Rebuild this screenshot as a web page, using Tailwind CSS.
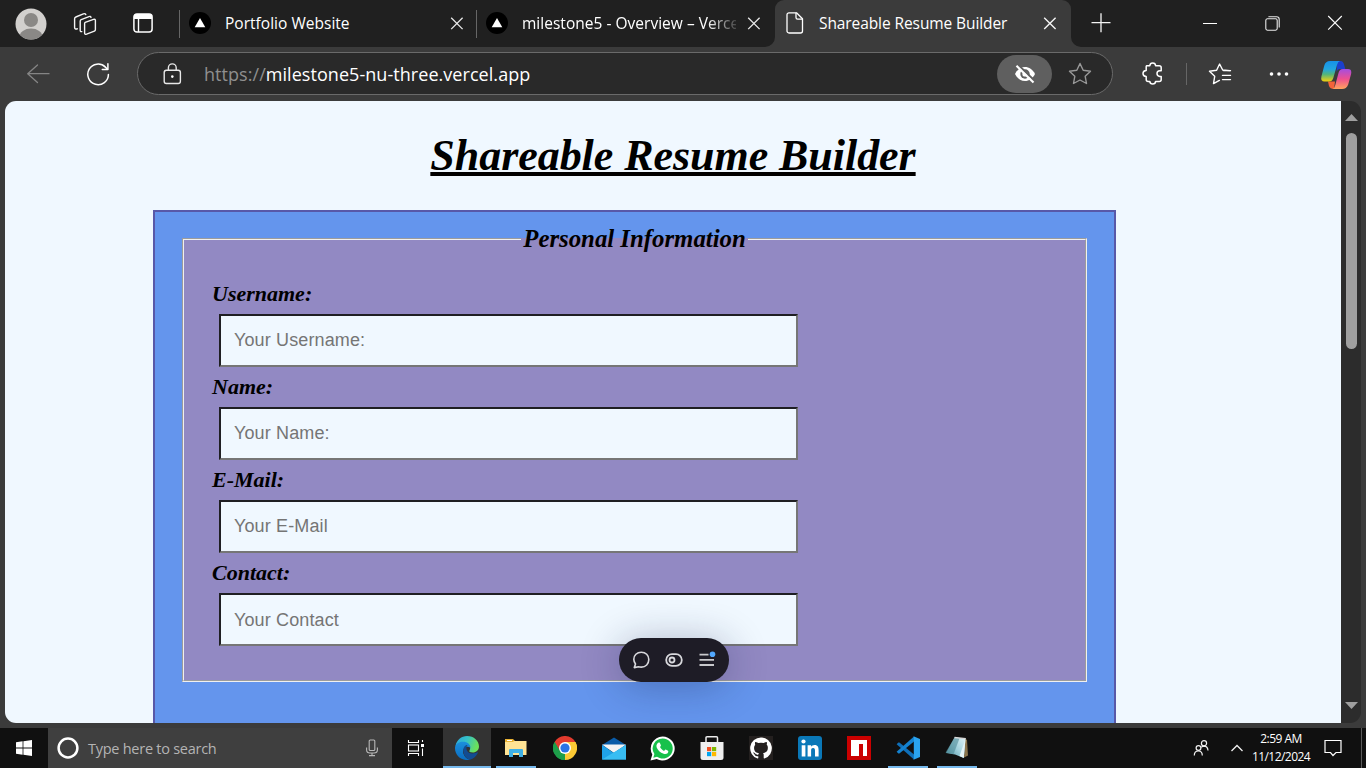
<!DOCTYPE html>
<html lang="en">
<head>
<meta charset="utf-8">
<title>Shareable Resume Builder</title>
<script src="https://cdn.jsdelivr.net/npm/@tailwindcss/browser@4"></script>
</head>
<body class="w-[1366px] h-[768px] overflow-hidden bg-[#3b3b3b] flex flex-col font-['Open_Sans','Noto_Sans',sans-serif] text-white">

<!-- Tab strip -->
<header class="h-[47px] shrink-0 bg-[#202020] flex items-center">
  <div class="w-[61px] flex justify-center">
    <svg width="32" height="32" viewBox="0 0 32 32"><defs><clipPath id="av"><circle cx="16" cy="16" r="15.5"/></clipPath></defs><circle cx="16" cy="16" r="15.5" fill="#d2d0ce"/><g clip-path="url(#av)" fill="#8a8886"><circle cx="16" cy="12" r="7"/><ellipse cx="16" cy="29" rx="11.5" ry="8.5"/></g></svg>
  </div>
  <div class="w-[48px] flex justify-center">
    <svg width="24" height="24" viewBox="0 0 24 24" fill="none" stroke="#f4f4f4" stroke-width="1.4" stroke-linejoin="round" stroke-linecap="round"><path d="M12.2 10.4 L20.5 7.4 Q22.4 6.8 22.4 8.6 V17.6 Q22.4 18.8 21.4 19.2 L13.6 22.2 Q11.6 22.8 11.6 21 V11.8 Q11.6 10.7 12.2 10.4Z"/><path d="M8.8 19.6 Q7.2 20 7.2 18.2 V9.2 Q7.2 8 8.2 7.6 L16 4.6 Q17.6 4 18 5.4"/><path d="M4.4 16.8 Q1.6 17.6 1.6 15.4 V6.8 Q1.6 5.4 2.8 5 L10.4 1.8 Q12.2 1.2 12.8 2.6"/></svg>
  </div>
  <div class="w-[67px] flex justify-center pb-px">
    <svg width="20" height="20" viewBox="0 0 20 20"><rect x=".9" y=".9" width="18.2" height="18.2" rx="3" fill="none" stroke="#fff" stroke-width="1.5"/><path d="M1 6V4a3 3 0 0 1 3-3h12a3 3 0 0 1 3 3v2z" fill="#fff"/><path d="M5.5 5V19" stroke="#fff" stroke-width="1.4"/></svg>
  </div>
  <div class="ml-[3px] w-px h-[28px] bg-[#666]"></div>
  <div class="w-[296px] h-full flex items-center pl-[9px] pr-[12px] pb-px">
    <svg width="22" height="22" viewBox="0 0 22 22" class="shrink-0"><circle cx="11" cy="11" r="11" fill="#000"/><path d="M11 6l5.3 9.2H5.7z" fill="#fff"/></svg>
    <div class="ml-[14px] flex-1 pt-px text-[15.5px] tracking-[0.02px] whitespace-nowrap">Portfolio Website</div>
    <svg width="14" height="14" viewBox="0 0 14 14" stroke="#e8e8e8" stroke-width="1.3"><path d="M1.2 1.7l11.4 11.4M12.6 1.7L1.2 13.1"/></svg>
  </div>
  <div class="w-px h-[28px] bg-[#666]"></div>
  <div class="w-[298px] h-full flex items-center pl-[9px] pr-[14px] pb-px">
    <svg width="22" height="22" viewBox="0 0 22 22" class="shrink-0"><circle cx="11" cy="11" r="11" fill="#000"/><path d="M11 6l5.3 9.2H5.7z" fill="#fff"/></svg>
    <div class="ml-[14px] w-[214px] shrink-0 overflow-hidden pt-px text-[15.5px] tracking-[0.02px] whitespace-nowrap [mask-image:linear-gradient(to_right,#000_185px,transparent_220px)]">milestone5 - Overview – Vercel</div>
    <svg class="ml-auto shrink-0" width="14" height="14" viewBox="0 0 14 14" stroke="#e8e8e8" stroke-width="1.3"><path d="M1.2 1.7l11.4 11.4M12.6 1.7L1.2 13.1"/></svg>
  </div>
  <div class="relative w-[296px] h-full bg-[#3b3b3b] rounded-t-[9px] flex items-center pl-[11px] pr-[14px] pb-px">
    <svg class="absolute -left-[10px] bottom-0" width="10" height="10" viewBox="0 0 10 10"><path d="M10 0A10 10 0 0 1 0 10H10z" fill="#3b3b3b"/></svg>
    <svg class="absolute -right-[10px] bottom-0" width="10" height="10" viewBox="0 0 10 10"><path d="M0 0A10 10 0 0 0 10 10H0z" fill="#3b3b3b"/></svg>
    <svg width="18" height="22" viewBox="0 0 18 22" fill="none" stroke="#fff" stroke-width="1.3" stroke-linejoin="round"><path d="M3 .8h7.5l6 6V19a2 2 0 0 1-2 2H3a2 2 0 0 1-2-2V2.8a2 2 0 0 1 2-2z"/><path d="M10 .8V5.5a1.6 1.6 0 0 0 1.6 1.6h5"/></svg>
    <div class="ml-[15px] flex-1 pt-px text-[15.5px] tracking-[-0.09px] whitespace-nowrap">Shareable Resume Builder</div>
    <svg width="14" height="14" viewBox="0 0 14 14" stroke="#f4f4f4" stroke-width="1.4"><path d="M1.2 1.7l11.4 11.4M12.6 1.7L1.2 13.1"/></svg>
  </div>
  <div class="w-[60px] flex justify-center pb-px"><svg width="20" height="20" viewBox="0 0 20 20" stroke="#f4f4f4" stroke-width="1.3"><path d="M.5 9.6h19M10 .2v19"/></svg></div>
  <div class="w-[49px]"></div>
  <div class="w-[59px] flex justify-center pb-px"><svg width="14" height="14" viewBox="0 0 14 14"><path d="M0 7.5h14" stroke="#fff"/></svg></div>
  <div class="w-[66px] flex justify-center pb-px"><svg width="15" height="15" viewBox="0 0 15 15" fill="none" stroke="#e8e8e8" stroke-width="1.1"><rect x=".8" y="2.8" width="11.4" height="11.4" rx="1.6"/><path d="M3.4 .8H11.6Q14.2 .8 14.2 3.4V11.5"/></svg></div>
  <div class="w-[60px] flex justify-center pb-px"><svg width="16" height="16" viewBox="0 0 16 16" stroke="#fff" stroke-width="1.1"><path d="M1.2 1l13.6 13.6M14.8 1L1.2 14.6"/></svg></div>
</header>

<!-- Address bar row -->
<nav class="h-[54px] shrink-0 flex items-center pb-px">
  <div class="w-[76px] flex justify-center"><svg width="24" height="20" viewBox="0 0 24 20" fill="none" stroke="#858585" stroke-width="1.3" stroke-linecap="round" stroke-linejoin="round"><path d="M11.5 1L1.7 9.700l9.800 8.900M2 9.700h21"/></svg></div>
  <div class="w-[61px] flex justify-center pr-[17px]"><svg width="24" height="24" viewBox="0 0 24 24" fill="none" stroke="#fff" stroke-width="1.500" stroke-linecap="round" stroke-linejoin="round"><path d="M22.400 12.400A10.300 10.300 0 1 1 19.400 5.100L21.400 7.200"/><path d="M21.900 1.800V7.400H16.300"/></svg></div>
  <div class="w-[976px] h-[43px] rounded-full border border-[#6a6a6a] bg-[#292929] flex items-center pl-[25px]">
    <svg width="19" height="22" viewBox="0 0 19 22" fill="none" stroke="#e8e8e8" stroke-width="1.4"><rect x="1.2" y="7.3" width="16.2" height="13.2" rx="2.2"/><path d="M5.4 7V4.8a3.9 3.9 0 0 1 7.8 0V7"/><circle cx="9.3" cy="13.6" r="1.3" fill="#fff" stroke="none"/></svg>
    <div class="ml-[22px] flex-1 pt-px text-[18px] tracking-[0.05px] whitespace-nowrap"><span class="text-[#8f8f8f]">https://</span>milestone5-nu-three.vercel.app</div>
    <div class="w-[55px] h-[38px] rounded-full bg-[#5f5f5f] flex items-center justify-center">
      <svg width="22" height="20" viewBox="0 0 22 20" fill="none"><path d="M1 10C3.400 5.300 7 3 11 3s7.600 2.300 10 7c-2.400 4.700-6 7-10 7S3.400 14.700 1 10z" fill="#fff"/><circle cx="11" cy="10" r="4.700" fill="#5f5f5f"/><circle cx="11" cy="10" r="2.600" fill="#fff"/><path d="M4.200 1L20.200 16.500" stroke="#5f5f5f" stroke-width="2.400"/><path d="M2.500 1.800L19.500 18.500" stroke="#fff" stroke-width="2.100"/></svg>
    </div>
    <svg class="ml-[16px] mr-[20px]" width="24" height="23" viewBox="0 0 24 23" fill="none" stroke="#999" stroke-width="1.400" stroke-linejoin="round"><path d="M12 1.500l3.200 6.700 7.300 1-5.300 5.100 1.300 7.200L12 18l-6.500 3.500 1.300-7.200L1.500 9.200l7.300-1z"/></svg>
  </div>
  <div class="w-[73px] flex justify-center pl-[5px]"><svg width="21" height="23" viewBox="0 0 21 23" fill="none" stroke="#fff" stroke-width="1.500" stroke-linejoin="round"><path d="M4.500 3.800H7.800Q8 1 10.700 1T13.600 3.800H17.200Q19.200 3.800 19.200 5.800V8.800H17.800Q15 9 15 11.600T17.800 14.400H19.200V17.400Q19.200 19.400 17.200 19.400H13.600Q13.400 22 10.700 22T7.800 19.400H6.200Q4.200 19.400 4.200 17.400V14.600Q1 14.400 1 11.600T4.200 8.600V4.600Q4.200 3.800 5 3.800z"/></svg></div>
  <div class="w-px h-[22px] bg-[#666]"></div>
  <div class="w-[65px] flex justify-center"><svg width="24" height="22" viewBox="0 0 24 22" fill="none" stroke="#fff" stroke-width="1.400" stroke-linejoin="round" stroke-linecap="round"><path d="M22 7.600L14.700 7 11.600 1 8.600 7.300 1.500 8.300 6.700 13.300 5.500 20.600 11.400 17.400"/><path d="M15.500 7.600H22.500M14.500 12.400H22.500M14.500 16.600H22.500"/></svg></div>
  <div class="w-[54px] flex justify-center"><svg width="20" height="6" viewBox="0 0 20 6" fill="#fff"><circle cx="2.500" cy="3" r="1.800"/><circle cx="10" cy="3" r="1.800"/><circle cx="17.500" cy="3" r="1.800"/></svg></div>
  <div class="w-[60px] flex justify-center pt-[3px]"><svg width="32" height="30" viewBox="0 0 32 30">
    <defs>
      <linearGradient id="c1" x1="0" y1="0" x2="0" y2="1"><stop offset="0" stop-color="#1691e8"/><stop offset=".4" stop-color="#22a5e0"/><stop offset=".65" stop-color="#52b57b"/><stop offset="1" stop-color="#f4d10c"/></linearGradient>
      <linearGradient id="c2" x1="0" y1="0" x2="0" y2="1"><stop offset="0" stop-color="#a54de0"/><stop offset=".5" stop-color="#ee5090"/><stop offset="1" stop-color="#ffa45c"/></linearGradient>
    </defs>
    <path d="M17 1h3.500q2.500 0 3.400 3L25.300 9H20q-2.500 0-3.400 3z" fill="#1b3fcc"/>
    <path d="M8 21.500h7L14 29q-4 0-5-3z" fill="#f2633a"/>
    <path d="M10 1h10q-2.200.5-3 4l-3.700 13q-1 3.500-4.500 3.500H4.500Q.4 21.500 1.400 16.500L4.300 5.500Q5.500 1 10 1z" fill="url(#c1)"/>
    <path d="M22 29H12.500q2-.5 2.800-4l3.200-12q1-4 4.500-4h5q4.100 0 3.100 5l-2.900 10.500Q26.500 29 22 29z" fill="url(#c2)"/>
  </svg></div>
</nav>

<!-- Viewport -->
<div class="h-[622px] shrink-0 ml-[5px] mr-[5px] flex rounded-[11px] overflow-hidden">
  <main class="relative w-[1336px] h-full overflow-hidden bg-[#f0f8ff] text-black font-['Liberation_Serif',serif] italic font-bold">
    <h1 class="mt-[30px] text-center text-[44px] leading-[50px] tracking-[-0.05px] underline decoration-[4px]">Shareable Resume Builder</h1>
    <form class="mt-[29px] ml-[148px] w-[963px] h-[600px] border-2 border-[#5858a8] bg-[#6495ed] pt-[13px] px-[27px]">
      <fieldset class="h-[457px] w-[905px] border-2 [border-style:groove] border-[#f0f0f0] bg-[#9289c3] px-[28px] pt-[21px]">
        <legend class="mx-auto px-[2px] text-[24.8px] leading-[28px]">Personal Information</legend>
        <label class="block h-[40px] leading-[40px] text-[22px]">Username:</label>
        <input class="block ml-[7px] w-[579px] h-[53px] border-2 border-t-[#1f1f23] border-l-[#1f1f23] border-b-[#767676] border-r-[#767676] bg-[#f0f8ff] pl-[13px] not-italic font-normal font-['Liberation_Sans',sans-serif] text-[18px] tracking-[0.13px] placeholder:text-[#757575]" placeholder="Your Username:">
        <label class="block h-[40px] leading-[40px] text-[22px]">Name:</label>
        <input class="block ml-[7px] w-[579px] h-[53px] border-2 border-t-[#1f1f23] border-l-[#1f1f23] border-b-[#767676] border-r-[#767676] bg-[#f0f8ff] pl-[13px] not-italic font-normal font-['Liberation_Sans',sans-serif] text-[18px] tracking-[0.13px] placeholder:text-[#757575]" placeholder="Your Name:">
        <label class="block h-[40px] leading-[40px] text-[22px]">E-Mail:</label>
        <input class="block ml-[7px] w-[579px] h-[53px] border-2 border-t-[#1f1f23] border-l-[#1f1f23] border-b-[#767676] border-r-[#767676] bg-[#f0f8ff] pl-[13px] not-italic font-normal font-['Liberation_Sans',sans-serif] text-[18px] tracking-[0.13px] placeholder:text-[#757575]" placeholder="Your E-Mail">
        <label class="block h-[40px] leading-[40px] text-[22px]">Contact:</label>
        <input class="block ml-[7px] w-[579px] h-[53px] border-2 border-t-[#1f1f23] border-l-[#1f1f23] border-b-[#767676] border-r-[#767676] bg-[#f0f8ff] pl-[13px] pt-[2px] not-italic font-normal font-['Liberation_Sans',sans-serif] text-[18px] tracking-[0.13px] placeholder:text-[#757575]" placeholder="Your Contact">
      </fieldset>
    </form>
    <!-- Floating toolbar -->
    <div class="absolute left-[614px] top-[537px] w-[110px] h-[44px] rounded-full bg-[#1e1c26] shadow-[0_4px_40px_rgba(20,30,70,0.32)] flex items-center justify-center gap-[15px]">
      <svg width="18" height="18" viewBox="0 0 18 18" fill="none" stroke="#d8d8dc" stroke-width="1.600" stroke-linejoin="round"><path d="M9.300 1.200C4.900 1.200 1.800 4.300 1.800 8.300c0 1.900.7 3.400 1.700 4.700L2.300 16.600l4.200-.9c.9.300 1.800.4 2.800.4 4.400 0 7.500-3.200 7.500-7.500s-3.100-7.400-7.500-7.400z"/></svg>
      <svg width="18" height="14" viewBox="0 0 18 14" fill="none" stroke="#d8d8dc" stroke-width="1.800"><rect x="1.200" y="1.200" width="15.600" height="11.600" rx="5.800"/><circle cx="7" cy="7" r="2.500"/></svg>
      <svg width="18" height="18" viewBox="0 0 18 18" fill="none" stroke="#c8c8cc" stroke-width="1.800"><path d="M1.500 3.600h9M1.500 8.800h14.500M1.500 14h14.500"/><circle cx="14.500" cy="3.300" r="2.800" fill="#52a8ff" stroke="none"/></svg>
    </div>
  </main>
  <!-- Scrollbar -->
  <div class="w-[20px] h-full bg-[#2c2c2c] flex flex-col items-center">
    <svg class="mt-[13px]" width="13" height="7" viewBox="0 0 13 7"><path d="M6.500 0L13 7H0z" fill="#9f9f9f"/></svg>
    <div class="mt-[12px] w-[11px] h-[216px] rounded-full bg-[#9f9f9f]"></div>
    <svg class="mt-auto mb-[14px]" width="13" height="7" viewBox="0 0 13 7"><path d="M6.500 7L13 0H0z" fill="#9f9f9f"/></svg>
  </div>
</div>

<!-- Taskbar -->
<footer class="mt-[5px] h-[40px] shrink-0 bg-[#101010] flex">
  <div class="w-[48px] flex items-center justify-center"><svg width="16" height="16" viewBox="0 0 16 16" fill="#fff"><path d="M0 2.300L6.600 1.300V7.500H0zM7.400 1.200L16 0V7.500H7.400zM0 8.400H6.600V14.700L0 13.700zM7.400 8.400H16V16L7.400 14.800z"/></svg></div>
  <div class="w-[344px] bg-[#3f3f3f] flex items-center pl-[9px] pr-[13px]">
    <svg width="22" height="22" viewBox="0 0 22 22"><circle cx="11" cy="11" r="9.400" fill="none" stroke="#fff" stroke-width="2.500"/></svg>
    <div class="ml-[9px] flex-1 pt-[2px] text-[14.500px] tracking-[-0.260px] text-[#b4b4b4]">Type here to search</div>
    <svg width="14" height="18" viewBox="0 0 14 18" fill="none" stroke="#b8b8b8" stroke-width="1.100"><rect x="4.200" y="1" width="5.600" height="10.500" rx="1"/><path d="M1.600 8.500V11Q1.600 14 5 14h4Q12.400 14 12.400 11V8.500M7 14v2.500M4 16.600h6"/></svg>
  </div>
  <div class="w-[51px] flex items-center justify-center pr-[4px] pb-px"><svg width="17" height="16" viewBox="0 0 17 16" fill="none" stroke="#fff" stroke-width="1.100"><path d="M1.500 0V2.500H11.500V0M1.500 16V13.500H11.500V16M15.500 0V2M15.500 8.500V16"/><rect x="1.500" y="5" width="10" height="6"/><rect x="14" y="4" width="3" height="3" fill="#fff" stroke="none"/></svg></div>
  <div class="flex gap-px">
    <div class="w-[48px] bg-[#333] border-b-2 border-[#76b9ed] flex items-center justify-center pt-[2px]">
      <svg width="24" height="24" viewBox="0 0 24 24"><defs><linearGradient id="e1" x1="0" y1="0" x2="1" y2=".3"><stop offset="0" stop-color="#2aa6dd"/><stop offset=".5" stop-color="#35c1c8"/><stop offset="1" stop-color="#6be05a"/></linearGradient><linearGradient id="e2" x1="0" y1="0" x2="0" y2="1"><stop offset="0" stop-color="#1b8fdc"/><stop offset="1" stop-color="#0a6cc0"/></linearGradient></defs>
      <path d="M.5 10C1.500 4 6.500 0 12 0c7 0 12 5 12 10.500 0 3.500-2.800 6-6.200 6-3 0-4-1-3.300-2 2-3-.5-6.500-4.500-7C5.500 7 1.500 8.500.5 10z" fill="url(#e1)"/>
      <path d="M0 12C0 8.500 3.500 5.800 8 5.800c4.500 0 7.500 2.700 7.500 6C11 8.800 6.500 13 8.500 18c1 2.800 3.500 5 6.500 5.700C7 25.500 0 20 0 12z" fill="url(#e2)"/>
      <path d="M8.300 14.500C8.300 10.800 10.500 9 12.500 9c-2.500 3.500-.5 8.500 5 8.500 2 0 3.500-.5 4.800-1.200.4-.2.800.2.500.7-1.500 3-4.300 5.800-7.800 6.700-4-.8-6.700-5-6.700-9.200z" fill="#124c92"/></svg>
    </div>
    <div class="w-[48px] flex flex-col items-center justify-between pt-[11px]">
      <svg width="22" height="18" viewBox="0 0 22 18"><path d="M0 0h8l2 2h11v5H0z" fill="#e9b233"/><path d="M2 1h5v1H2z" fill="#fff"/><path d="M0 3h8l1-1h12.500v14H0z" fill="#ffe394"/><path d="M4 18V11q0-1 1-1h12q1 0 1 1v7h-4v-4H8v4z" fill="#3fb0e6"/></svg>
      <div class="w-[40px] h-[2px] bg-[#76b9ed]"></div>
    </div>
    <div class="w-[48px] flex items-center justify-center">
      <svg width="24" height="24" viewBox="0 0 24 24"><path d="M12 12L1.600 6A12 12 0 0 1 22.400 6z" fill="#e33b2e"/><path d="M12 12L22.400 6A12 12 0 0 1 12 24z" fill="#fcc934"/><path d="M12 12L12 24A12 12 0 0 1 1.600 6z" fill="#1e9e4a"/><path d="M12 6H22.400Q24 9 24 12H16z" fill="#fcc934"/><path d="M1.600 6L7 15l5-3V6z" fill="#e33b2e"/><path d="M1.600 6L6.800 15 10 17.500 12 24A12 12 0 0 1 1.600 6z" fill="#1e9e4a"/><path d="M12 24L17.200 15 12 17z" fill="#fcc934"/><circle cx="12" cy="12" r="6" fill="#fff"/><circle cx="12" cy="12" r="4.600" fill="#2a74e6"/></svg>
    </div>
    <div class="w-[48px] flex items-center justify-center">
      <svg width="24" height="23" viewBox="0 0 24 23"><path d="M0 8L12 .5 24 8V12H0z" fill="#0a5ca8"/><path d="M0 7.500H24L12 16z" fill="#f4f4f4"/><path d="M0 8L12 16 24 8V22.500H0z" fill="#1fa2e8"/><path d="M0 22.500L24 8V22.500z" fill="#38bdf3"/></svg>
    </div>
    <div class="w-[48px] flex items-center justify-center pr-px">
      <svg width="25" height="25" viewBox="0 0 25 25"><path d="M12.500.5a12 12 0 1 1-5.800 22.400L.5 24.500l1.800-6A12 12 0 0 1 12.500.5z" fill="#fff"/><path d="M12.500 2.500a10 10 0 1 1-5.500 18.200L3.300 21.700l1.100-3.600A10 10 0 0 1 12.500 2.500z" fill="#17c14b"/><path d="M8.300 6.800c.5-.4 1.300-.4 1.600.2l1 2.200c.2.600-.7 1.400-.9 1.900 1 2 2.300 3 4.100 3.800.6-.3 1-1.400 1.600-1.300l2.300 1.200c.6.400.2 1.800-.4 2.400-1 .9-2.500 1-4 .5-3.300-1-6-3.700-7-6.500-.5-1.700.2-3.500 1.700-4.400z" fill="#fff"/></svg>
    </div>
    <div class="w-[48px] flex items-center justify-center">
      <svg width="24" height="24" viewBox="0 0 24 24"><path d="M6 6V1.800Q6 .8 7 .8h9.500q1 0 1 1V6" fill="none" stroke="#ececec" stroke-width="1.500"/><path d="M.5 6h23v15.500q0 2.500-2.500 2.500H3Q.5 24 .5 21.500z" fill="#efefef"/><path d="M7 11h4.200v4.200H7z" fill="#f25022"/><path d="M12 11h4.200v4.200H12z" fill="#7fba00"/><path d="M7 16h4.200v4.200H7z" fill="#00a4ef"/><path d="M12 16h4.200v4.200H12z" fill="#ffb900"/></svg>
    </div>
    <div class="w-[48px] flex items-center justify-center">
      <svg width="24" height="24" viewBox="0 0 24 24"><path d="M0 0h24v24H0z" fill="#24201f"/><g transform="translate(1.200 1.200) scale(.9)"><path fill="#fff" d="M12 .3a12 12 0 0 0-3.800 23.400c.6.100.8-.3.800-.6v-2c-3.300.7-4-1.600-4-1.600-.6-1.400-1.400-1.800-1.400-1.800-1-.7.100-.7.100-.7 1.200 0 1.900 1.200 1.900 1.200 1 1.800 2.800 1.300 3.500 1 0-.8.400-1.300.7-1.600-2.700-.3-5.500-1.300-5.500-6 0-1.200.5-2.300 1.300-3.100-.2-.4-.6-1.600 0-3.200 0 0 1-.3 3.400 1.200a11.500 11.500 0 0 1 6 0c2.300-1.500 3.300-1.200 3.300-1.200.6 1.600.2 2.800 0 3.200.9.800 1.300 1.900 1.300 3.200 0 4.600-2.800 5.600-5.500 5.900.5.400.9 1 .9 2.200v3.300c0 .3.100.7.800.6A12 12 0 0 0 12 .3"/></g></svg>
    </div>
    <div class="w-[48px] flex items-center justify-center">
      <svg width="24" height="24" viewBox="0 0 24 24"><rect width="24" height="24" rx="3" fill="#0a78b8"/><g fill="#fff"><circle cx="5.500" cy="5.500" r="2.100"/><path d="M3.700 9.200h3.700V20.400H3.700zM9.600 9.200h3.500v1.500c.6-1 1.800-1.800 3.500-1.800 3.400 0 4 2.300 4 5.200v6.300H17v-5.600c0-1.400-.1-2.900-1.900-2.900s-2 1.400-2 2.800v5.700H9.600z"/></g></svg>
    </div>
    <div class="w-[48px] flex items-center justify-center">
      <svg width="24" height="24" viewBox="0 0 24 24"><path d="M0 0h24v24H0z" fill="#cb0000"/><path d="M4 4h16v16h-4V8h-4v12H4z" fill="#fff"/></svg>
    </div>
    <div class="w-[48px] flex flex-col items-center justify-between pt-[8px]">
      <svg width="24" height="24" viewBox="0 0 24 24"><path d="M.6 8.200L2.400 6.600q.5-.4 1 0L18 18.500V23.500z" fill="#0f6fb8"/><path d="M.6 15.800l1.800 1.600q.5.400 1 0L18 5.500V.5z" fill="#1482d0"/><path d="M17.500.2L24 3V21l-6.500 2.800q-.7.200-1.200-.3 1.500 1 1.500-.7V1.200Q17.800-.4 16.300.5q.5-.5 1.200-.3z" fill="#2aa3ee"/></svg>
      <div class="w-[40px] h-[2px] bg-[#76b9ed]"></div>
    </div>
    <div class="w-[48px] flex flex-col items-center justify-between pt-[8px]">
      <svg width="24" height="24" viewBox="0 0 24 24"><defs><linearGradient id="n1" x1="0" y1="1" x2="1" y2="0"><stop offset="0" stop-color="#4a8f9c"/><stop offset=".5" stop-color="#9fd0dc"/><stop offset="1" stop-color="#e0f2f6"/></linearGradient></defs><path d="M20 2.500l2 1.500 1 15.500-4 2z" fill="#8a744c"/><path d="M9.500 1.500L20.500 2.500 18.800 22 10 18.500 1 17z" fill="url(#n1)"/><path d="M9.500 1.500L.5 16.500l8 1.800L14.500 2.200z" fill="#4f8b97" opacity=".6"/><path d="M20.500 3L18.800 22 14.500 20z" fill="#e4f3f6"/><path d="M9.500 1.500L20.800 2.700" stroke="#d8d8d8" stroke-width="1.300"/></svg>
      <div class="w-[40px] h-[2px] bg-[#76b9ed]"></div>
    </div>
  </div>
  <div class="ml-auto flex items-center">
    <svg class="mr-[21px]" width="16" height="16" viewBox="0 0 16 16" fill="none" stroke="#f0f0f0" stroke-width="1.200"><circle cx="5.500" cy="8" r="2.400"/><path d="M1.300 15.500Q1.300 11 5.300 11T9.300 15.500"/><circle cx="11" cy="3.200" r="2.600"/><path d="M8.200 7.400Q9.500 6.200 11 6.200 14.700 6.300 15 10.500"/></svg>
    <svg width="14" height="8" viewBox="0 0 14 8" fill="none" stroke="#f0f0f0" stroke-width="1.300"><path d="M1.500 7L7 1.500 12.500 7"/></svg>
    <div class="ml-[7px] w-[60px] text-center text-[12px] leading-[18px] tracking-[-0.550px] whitespace-nowrap"><div>2:59 AM</div><div>11/12/2024</div></div>
    <svg class="ml-[13px] mr-[19px]" width="18" height="18" viewBox="0 0 18 18" fill="none" stroke="#fff" stroke-width="1.200"><path d="M1 1.500H17V13.500H12L9 16.500 6.500 13.500H1z"/></svg>
    <div class="w-px h-full bg-[#5a5a5a] mr-[4px]"></div>
  </div>
</footer>
</body>
</html>
